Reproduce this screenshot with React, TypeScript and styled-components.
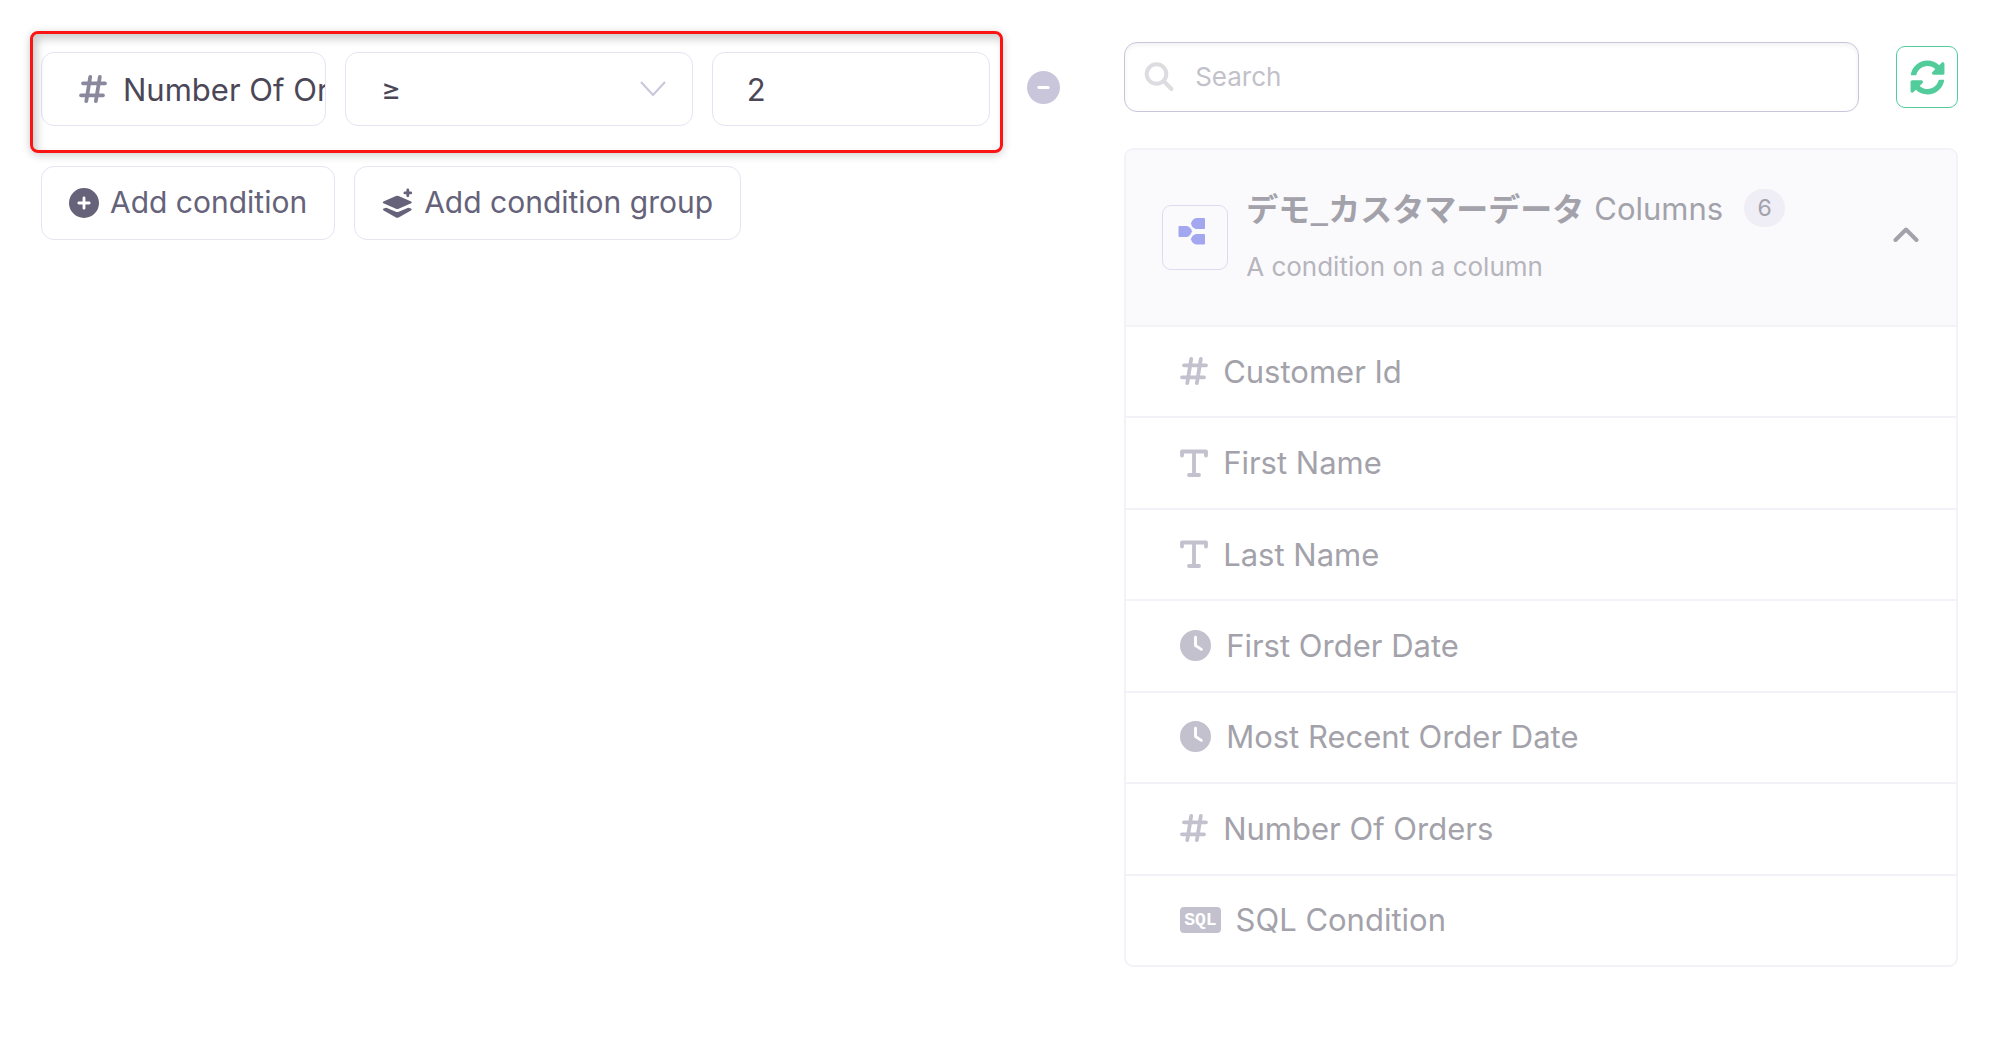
import React, { useState } from "react";
import styled, { createGlobalStyle, css } from "styled-components";
import { FaCirclePlus, FaCircleMinus, FaClock } from "react-icons/fa6";
import { FaSyncAlt } from "react-icons/fa";

const color = {
  ink: "#4b4757",
  action: "#65627a",
  muted: "#a3a2aa",
  subtle: "#b6b5bc",
  icon: "#c3c1cd",
  line: "#e6e4f1",
  panelLine: "#f3f2f8",
  lilac: "#c9c6dc",
  green: "#52cc9b",
};

const GlobalStyle = createGlobalStyle`
  *, *::before, *::after { box-sizing: border-box; }
  body {
    margin: 0;
    background: #fff;
    color: ${color.ink};
    font-family: Inter, "Noto Sans CJK JP", sans-serif;
    font-size: 31px;
  }
  button, input, select { font: inherit; color: inherit; }
  button { cursor: pointer; }
  svg { display: block; }
`;

const Page = styled.main`
  display: grid;
  grid-template-columns: minmax(0, 11fr) minmax(0, 9fr);
  gap: 64px;
  padding: 42px 42px 42px 41px;
`;

const Builder = styled.section`
  display: flex;
  flex-direction: column;
  gap: 40px;
  padding-top: 10px;
`;

const ConditionRow = styled.div`
  display: flex;
  align-items: center;
  gap: 37px;
`;

const Fields = styled.div`
  position: relative;
  flex: 1;
  min-width: 0;
  display: grid;
  grid-template-columns: 285fr 347fr 278fr;
  gap: 19px;
`;

const Highlight = styled.div`
  position: absolute;
  inset: -21px -13px -27px -11px;
  border: 3px solid #fb1414;
  border-radius: 8px;
  box-shadow: 0 2px 10px rgba(0, 0, 0, 0.2), inset 4px 5px 9px rgba(0, 0, 0, 0.2);
  pointer-events: none;
`;

const pill = css`
  height: 74px;
  border: 1px solid ${color.line};
  border-radius: 13px;
  background: #fff;
`;

const ColumnPill = styled.button`
  ${pill}
  display: flex;
  align-items: center;
  gap: 16px;
  padding: 0 0 0 37px;
  overflow: hidden;
  white-space: nowrap;
  svg { flex: none; color: #8a889c; }
`;

const SelectWrap = styled.div`
  display: grid;
  align-items: center;
  > * { grid-area: 1 / 1; }
  > svg { justify-self: end; margin-right: 27px; pointer-events: none; }
`;

const Operator = styled.select`
  ${pill}
  width: 100%;
  padding: 0 60px 0 35px;
  appearance: none;
  font-size: 30px;
`;

const ValueInput = styled.input`
  ${pill}
  width: 100%;
  min-width: 0;
  padding: 0 34px;
`;

const RemoveButton = styled.button`
  display: flex;
  padding: 0 0 4px;
  border: 0;
  background: none;
  color: ${color.lilac};
`;

const Actions = styled.div`
  display: flex;
  gap: 19px;
`;

const ActionButton = styled.button`
  ${pill}
  display: flex;
  align-items: center;
  gap: 11px;
  padding: 0 27px;
  color: ${color.action};
  font-size: 30px;
  white-space: nowrap;
`;

const ActionLabel = styled.span`
  padding-bottom: 3px;
`;

const Sidebar = styled.aside`
  display: flex;
  flex-direction: column;
  gap: 36px;
`;

const SearchRow = styled.div`
  display: flex;
  align-items: center;
  gap: 37px;
`;

const SearchBox = styled.label`
  flex: 1;
  min-width: 0;
  height: 70px;
  display: flex;
  align-items: center;
  gap: 20px;
  padding: 0 19px 2px;
  border: 1px solid ${color.lilac};
  border-radius: 13px;
  box-shadow: inset 0 2px 5px rgba(0, 0, 0, 0.06);
`;

const SearchInput = styled.input`
  flex: 1;
  min-width: 0;
  padding: 0;
  border: 0;
  outline: 0;
  background: none;
  font-size: 26px;
  &::placeholder { color: #c2c1c9; opacity: 1; }
`;

const RefreshButton = styled.button`
  width: 62px;
  height: 62px;
  display: grid;
  place-items: center;
  padding: 0;
  border: 1px solid ${color.green};
  border-radius: 9px;
  background: #fff;
  color: ${color.green};
`;

const Panel = styled.section`
  border: 2px solid ${color.panelLine};
  border-radius: 9px;
  overflow: hidden;
`;

const PanelHeader = styled.button`
  width: 100%;
  display: flex;
  align-items: center;
  gap: 18px;
  padding: 28px 37px 29px 36px;
  border: 0;
  background: #fafafd;
  color: ${color.muted};
  text-align: left;
`;

const SourceIcon = styled.span`
  flex: none;
  width: 66px;
  height: 65px;
  padding: 11px 0 0 15px;
  border: 1px solid #dcdcf1;
  border-radius: 9px;
`;

const HeaderText = styled.span`
  flex: 1;
  min-width: 0;
`;

const Title = styled.span`
  display: flex;
  align-items: center;
  gap: 10px;
  height: 60px;
  white-space: nowrap;
`;

const SourceName = styled.strong`
  padding-bottom: 3px;
  font-family: "Noto Sans CJK JP", sans-serif;
  font-size: 32px;
  font-weight: 700;
  line-height: 40px;
`;

const Count = styled.span`
  display: grid;
  place-items: center;
  width: 41px;
  height: 38px;
  margin-left: 11px;
  border-radius: 20px;
  background: #efeef6;
  font-size: 23px;
`;

const Subtitle = styled.span`
  display: block;
  color: ${color.subtle};
  font-size: 26px;
  line-height: 58px;
`;

const ColumnList = styled.ul`
  min-height: 640px;
  display: grid;
  grid-auto-rows: 1fr;
  margin: 0;
  padding: 0;
  list-style: none;
`;

const ColumnItem = styled.li`
  display: flex;
  border-top: 2px solid ${color.panelLine};
`;

const ColumnButton = styled.button`
  flex: 1;
  display: flex;
  align-items: center;
  gap: 15px;
  padding: 0 54px 1px;
  border: 0;
  background: none;
  color: ${color.muted};
  > :first-child { flex: none; color: ${color.icon}; }
`;

const SqlTag = styled.span`
  height: 26px;
  padding: 0 4px;
  border-radius: 4px;
  background: ${color.icon};
  font-family: "Liberation Mono", monospace;
  font-size: 18px;
  font-weight: 700;
  line-height: 26px;
`;

const SqlLabel = styled.span`
  color: #fff;
`;

const Hash = () => (
  <svg width="28" height="28" viewBox="0 0 28 28" fill="none" stroke="currentColor" strokeWidth="3.8" strokeLinecap="round">
    <path d="M4 8.3H26M2 20.3H24M11.2 2 7.3 26M20.8 2 16.9 26" />
  </svg>
);

const TypeText = () => (
  <svg width="28" height="28" viewBox="0 0 28 28" fill="none" stroke="currentColor" strokeWidth="3.8" strokeLinecap="round" strokeLinejoin="round">
    <path d="M2 6.5V2.5H26V6.5M14 2.5V26M9 26H19" />
  </svg>
);

const Clock = () => <FaClock size={31} />;

const Sql = () => (
  <SqlTag>
    <SqlLabel>SQL</SqlLabel>
  </SqlTag>
);

const LayersPlus = () => (
  <svg width="31" height="31" viewBox="0 0 31 31" fill="currentColor">
    <path d="M14 8q1.300-.6 2.600 0l12.600 5.500q1.400.9 0 1.800l-12.600 5.500q-1.300.6-2.600 0L1.400 15.300q-1.400-.9 0-1.800z" />
    <path d="M1.600 20.600 4.400 19.700 13.800 23.700q1.500.6 3 0l9.400-4 2.800.9q1.500.9 0 1.900l-12.400 6.900q-1.300.6-2.600 0L1.600 22.500q-1.500-1 0-1.900z" />
    <path d="M25.800 2V7.800M22.900 4.900H28.700" stroke="currentColor" strokeWidth="2.800" strokeLinecap="round" />
  </svg>
);

const SearchIcon = () => (
  <svg width="31" height="31" viewBox="0 0 31 31" fill="none" stroke="#dddce1" strokeWidth="4" strokeLinecap="round">
    <circle cx="12.5" cy="13" r="9.8" />
    <path d="M20 20.5 27.5 28" />
  </svg>
);

const SourceTree = () => (
  <svg width="28" height="28" viewBox="0 0 28 28" fill="#a2a7f0">
    <path d="M1.500 9H9q3.500 1 5 5.300Q12.500 19 9 20H1.500Q.5 20 .5 19v-9Q.5 9 1.500 9z" />
    <path d="M18 1h8q1 0 1 1v9q0 1-1 1h-8q-4-1-5-5.500 1-4.500 5-5.500z" />
    <path d="M18 17h8q1 0 1 1v8.500q0 1-1 1h-8q-4-1-5-5.200 1-4.300 5-5.300z" />
  </svg>
);

const columns = [
  { label: "Customer Id", Icon: Hash },
  { label: "First Name", Icon: TypeText },
  { label: "Last Name", Icon: TypeText },
  { label: "First Order Date", Icon: Clock },
  { label: "Most Recent Order Date", Icon: Clock },
  { label: "Number Of Orders", Icon: Hash },
  { label: "SQL Condition", Icon: Sql },
];

export default function App() {
  const [value, setValue] = useState("2");
  const [query, setQuery] = useState("");
  const [open, setOpen] = useState(true);
  const visible = columns.filter((c) => c.label.toLowerCase().includes(query.toLowerCase()));

  return (
    <>
      <GlobalStyle />
      <Page>
        <Builder>
          <ConditionRow>
            <Fields>
              <ColumnPill type="button">
                <Hash />
                Number Of Orders
              </ColumnPill>
              <SelectWrap>
                <Operator aria-label="Operator" defaultValue="gte">
                  <option value="gte">≥</option>
                  <option value="lte">≤</option>
                </Operator>
                <svg width="26" height="16" viewBox="0 0 26 16" fill="none" stroke={color.lilac} strokeWidth="2">
                  <path d="M1 1 13 14 25 1" />
                </svg>
              </SelectWrap>
              <ValueInput aria-label="Value" value={value} onChange={(e) => setValue(e.target.value)} />
              <Highlight />
            </Fields>
            <RemoveButton type="button" aria-label="Remove condition">
              <FaCircleMinus size={33} />
            </RemoveButton>
          </ConditionRow>
          <Actions>
            <ActionButton type="button">
              <FaCirclePlus size={30} />
              <ActionLabel>Add condition</ActionLabel>
            </ActionButton>
            <ActionButton type="button">
              <LayersPlus />
              <ActionLabel>Add condition group</ActionLabel>
            </ActionButton>
          </Actions>
        </Builder>

        <Sidebar>
          <SearchRow>
            <SearchBox>
              <SearchIcon />
              <SearchInput
                type="text"
                aria-label="Search"
                placeholder="Search"
                value={query}
                onChange={(e) => setQuery(e.target.value)}
              />
            </SearchBox>
            <RefreshButton type="button" aria-label="Refresh">
              <FaSyncAlt size={35} />
            </RefreshButton>
          </SearchRow>
          <Panel>
            <PanelHeader type="button" aria-expanded={open} onClick={() => setOpen(!open)}>
              <SourceIcon>
                <SourceTree />
              </SourceIcon>
              <HeaderText>
                <Title>
                  <SourceName>デモ_カスタマーデータ</SourceName>
                  Columns
                  <Count>6</Count>
                </Title>
                <Subtitle>A condition on a column</Subtitle>
              </HeaderText>
              <svg width="26" height="20" viewBox="0 0 26 20" fill="none" stroke={color.muted} strokeWidth="4" strokeLinecap="round" strokeLinejoin="round">
                <path d="M2.5 13 13 2.5 23.500 13" />
              </svg>
            </PanelHeader>
            {open && (
              <ColumnList>
                {visible.map(({ label, Icon }) => (
                  <ColumnItem key={label}>
                    <ColumnButton type="button">
                      <Icon />
                      {label}
                    </ColumnButton>
                  </ColumnItem>
                ))}
              </ColumnList>
            )}
          </Panel>
        </Sidebar>
      </Page>
    </>
  );
}
